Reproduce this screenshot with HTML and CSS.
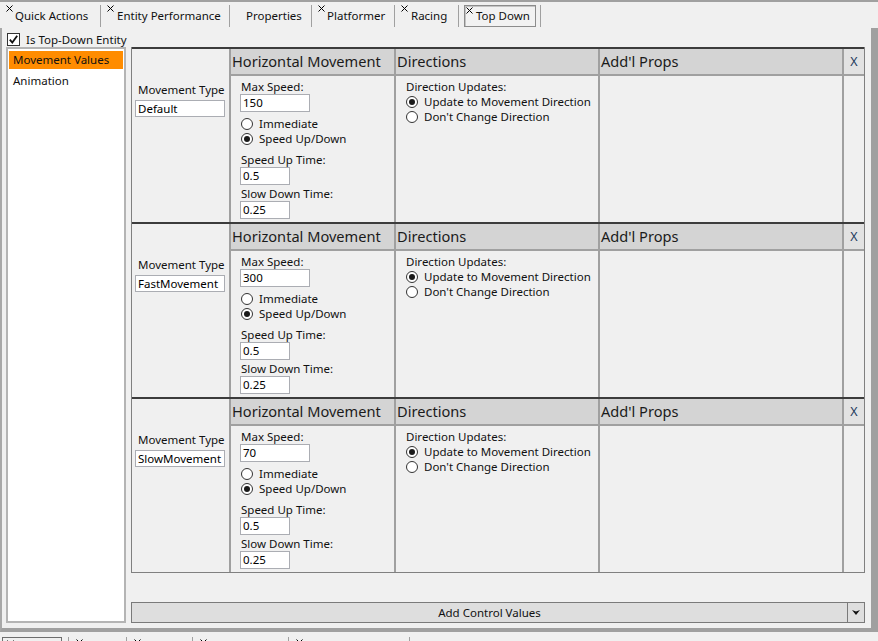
FILE: index.html
```html
<!DOCTYPE html>
<html>
<head>
<meta charset="utf-8">
<title>Top Down</title>
<link rel="stylesheet" href="styles.css">
</head>
<body>
<div class="tabstrip">
  <div class="tab tab-qa"><svg class="close" width="7" height="7" viewBox="0 0 7 7"><path d="M0.5 0.5L6.5 6.5M6.5 0.5L0.5 6.5"/></svg>Quick Actions</div>
  <div class="tab tab-ep"><svg class="close" width="7" height="7" viewBox="0 0 7 7"><path d="M0.5 0.5L6.5 6.5M6.5 0.5L0.5 6.5"/></svg>Entity Performance</div>
  <div class="tab tab-pr">Properties</div>
  <div class="tab tab-pf"><svg class="close" width="7" height="7" viewBox="0 0 7 7"><path d="M0.5 0.5L6.5 6.5M6.5 0.5L0.5 6.5"/></svg>Platformer</div>
  <div class="tab tab-ra"><svg class="close" width="7" height="7" viewBox="0 0 7 7"><path d="M0.5 0.5L6.5 6.5M6.5 0.5L0.5 6.5"/></svg>Racing</div>
  <div class="tab tab-td"><div class="tab-selected"><svg class="close close-sel" width="7" height="7" viewBox="0 0 7 7"><path d="M0.5 0.5L6.5 6.5M6.5 0.5L0.5 6.5"/></svg>Top Down</div></div>
</div>

<div class="page">
  <div class="check-row">
    <svg class="checkbox" width="13" height="13" viewBox="0 0 13 13"><rect x="0.5" y="0.5" width="12" height="12" fill="#fff" stroke="#333"/><path d="M2.8 6.6L5.3 9.6L10.2 2.8" fill="none" stroke="#111" stroke-width="1.8"/></svg>
    <span>Is Top-Down Entity</span>
  </div>
  <div class="workspace">
    <ul class="listbox">
      <li class="item selected">Movement Values</li>
      <li class="item">Animation</li>
    </ul>
    <div class="main">
      <div class="blocks">
        <section class="block">
          <div class="type-cell">
            <div class="lbl type-lbl">Movement Type</div>
            <div class="textbox type-box">Default</div>
          </div>
          <div class="hdr">Horizontal Movement</div>
          <div class="hdr">Directions</div>
          <div class="hdr">Add'l Props</div>
          <div class="hdr hdr-x">X</div>
          <div class="body hm">
            <div class="lbl">Max Speed:</div>
            <div class="textbox tb-wide">150</div>
            <div class="radios">
              <div class="radio-row"><span class="radio"></span>Immediate</div>
              <div class="radio-row"><span class="radio on"></span>Speed Up/Down</div>
            </div>
            <div class="lbl gap-a">Speed Up Time:</div>
            <div class="textbox tb-narrow">0.5</div>
            <div class="lbl gap-b">Slow Down Time:</div>
            <div class="textbox tb-narrow">0.25</div>
          </div>
          <div class="body dirs">
            <div class="lbl">Direction Updates:</div>
            <div class="radio-row"><span class="radio on"></span>Update to Movement Direction</div>
            <div class="radio-row"><span class="radio"></span>Don't Change Direction</div>
          </div>
          <div class="body"></div>
          <div class="body"></div>
        </section>

        <section class="block">
          <div class="type-cell">
            <div class="lbl type-lbl">Movement Type</div>
            <div class="textbox type-box">FastMovement</div>
          </div>
          <div class="hdr">Horizontal Movement</div>
          <div class="hdr">Directions</div>
          <div class="hdr">Add'l Props</div>
          <div class="hdr hdr-x">X</div>
          <div class="body hm">
            <div class="lbl">Max Speed:</div>
            <div class="textbox tb-wide">300</div>
            <div class="radios">
              <div class="radio-row"><span class="radio"></span>Immediate</div>
              <div class="radio-row"><span class="radio on"></span>Speed Up/Down</div>
            </div>
            <div class="lbl gap-a">Speed Up Time:</div>
            <div class="textbox tb-narrow">0.5</div>
            <div class="lbl gap-b">Slow Down Time:</div>
            <div class="textbox tb-narrow">0.25</div>
          </div>
          <div class="body dirs">
            <div class="lbl">Direction Updates:</div>
            <div class="radio-row"><span class="radio on"></span>Update to Movement Direction</div>
            <div class="radio-row"><span class="radio"></span>Don't Change Direction</div>
          </div>
          <div class="body"></div>
          <div class="body"></div>
        </section>

        <section class="block">
          <div class="type-cell">
            <div class="lbl type-lbl">Movement Type</div>
            <div class="textbox type-box">SlowMovement</div>
          </div>
          <div class="hdr">Horizontal Movement</div>
          <div class="hdr">Directions</div>
          <div class="hdr">Add'l Props</div>
          <div class="hdr hdr-x">X</div>
          <div class="body hm">
            <div class="lbl">Max Speed:</div>
            <div class="textbox tb-wide">70</div>
            <div class="radios">
              <div class="radio-row"><span class="radio"></span>Immediate</div>
              <div class="radio-row"><span class="radio on"></span>Speed Up/Down</div>
            </div>
            <div class="lbl gap-a">Speed Up Time:</div>
            <div class="textbox tb-narrow">0.5</div>
            <div class="lbl gap-b">Slow Down Time:</div>
            <div class="textbox tb-narrow">0.25</div>
          </div>
          <div class="body dirs">
            <div class="lbl">Direction Updates:</div>
            <div class="radio-row"><span class="radio on"></span>Update to Movement Direction</div>
            <div class="radio-row"><span class="radio"></span>Don't Change Direction</div>
          </div>
          <div class="body"></div>
          <div class="body"></div>
        </section>
      </div>
      <div class="combo">
        <span class="combo-text">Add Control Values</span>
        <span class="combo-btn"><svg width="8" height="5" viewBox="0 0 8 5"><path d="M0 0L4 1.4L8 0L4 5Z" fill="#111"/></svg></span>
      </div>
    </div>
  </div>
</div>

<div class="bottomstrip">
  <div class="btab btab-sel"><svg class="close" width="7" height="7" viewBox="0 0 7 7"><path d="M0.5 0.5L6.5 6.5M6.5 0.5L0.5 6.5"/></svg></div>
  <div class="btab btab-2"><svg class="close" width="7" height="7" viewBox="0 0 7 7"><path d="M0.5 0.5L6.5 6.5M6.5 0.5L0.5 6.5"/></svg></div>
  <div class="btab btab-3"><svg class="close" width="7" height="7" viewBox="0 0 7 7"><path d="M0.5 0.5L6.5 6.5M6.5 0.5L0.5 6.5"/></svg></div>
  <div class="btab btab-4"><svg class="close" width="7" height="7" viewBox="0 0 7 7"><path d="M0.5 0.5L6.5 6.5M6.5 0.5L0.5 6.5"/></svg></div>
  <div class="btab btab-5"><svg class="close" width="7" height="7" viewBox="0 0 7 7"><path d="M0.5 0.5L6.5 6.5M6.5 0.5L0.5 6.5"/></svg></div>
  <div class="btab btab-6"></div>
</div>
</body>
</html>
```

FILE: styles.css
```css
* {
  box-sizing: border-box;
  margin: 0;
  padding: 0;
}

html,
body {
  width: 878px;
  height: 641px;
  overflow: hidden;
}

body {
  background: #f0f0f0;
  font-family: "Noto Sans", "Segoe UI", sans-serif;
  font-size: 11.5px;
  color: #000;
}

/* ---------- top tab strip ---------- */
.tabstrip {
  display: flex;
  align-items: flex-start;
  height: 28px;
  border-top: 2px solid #a0a0a0;
}

.tab {
  position: relative;
  height: 22px;
  margin-top: 3px;
  padding-left: 16px;
  line-height: 22px;
  border-right: 1px solid #a0a0a0;
  color: #111;
  white-space: nowrap;
}

.tab-qa { width: 101px; padding-left: 15px; }
.tab-ep { width: 129px; }
.tab-pr { width: 82px; }
.tab-pf { width: 83px; padding-left: 15px; }
.tab-ra { width: 64px; }
.tab-td { width: 82px; padding-left: 5px; }

.close {
  position: absolute;
  left: 6px;
  top: 0;
  stroke: #000;
  stroke-width: 1;
}

.tab-selected {
  position: relative;
  width: 72px;
  height: 22px;
  padding-left: 11px;
  line-height: 20px;
  border: 1px solid #8c8c8c;
  box-shadow: inset 1px 1px 0 #c4c4c4;
  background: #f2f2f2;
}

.close-sel {
  left: 1px;
  top: 1px;
}

/* ---------- page ---------- */
.page {
  height: 604px;
  padding: 0 6px 5px 4px;
  border-left: 2px solid #a8a8a8;
  border-right: 7px solid #a0a0a0;
  border-bottom: 4px solid #a0a0a0;
  display: flex;
  flex-direction: column;
}

.check-row {
  display: flex;
  align-items: center;
  gap: 6px;
  height: 15px;
  margin: 4px 0 0 1px;
  color: #111;
}

.checkbox {
  display: block;
  flex: none;
}

.workspace {
  display: flex;
  gap: 5px;
  height: 576px;
}

.listbox {
  list-style: none;
  width: 120px;
  height: 576px;
  background: #fff;
  border: 2px solid #b4b4b4;
  padding: 2px 1px 1px;
}

.item {
  height: 18px;
  line-height: 18px;
  margin-bottom: 3px;
  padding-left: 4px;
  color: #111;
}

.item.selected {
  background: #ff8c00;
}

.main {
  width: 734px;
  display: flex;
  flex-direction: column;
}

.blocks {
  border: 1px solid #808080;
  border-top: none;
}

.block {
  display: grid;
  grid-template-columns: 97px 165px 204px 244px 22px;
  grid-template-rows: 27px 146px;
  border-top: 2px solid #3c3c3c;
}

.type-cell {
  grid-row: 1 / 3;
  padding: 33px 0 0 3px;
}

.type-lbl {
  padding-left: 3px;
}

.hdr {
  background: #d4d4d4;
  border-left: 2px solid #a0a0a0;
  border-bottom: 2px solid #a0a0a0;
  font-size: 14.6px;
  line-height: 25px;
  padding-left: 1px;
  color: #1b1b1b;
  white-space: nowrap;
  overflow: hidden;
}

.hdr-x {
  background: #e2e2e2;
  padding-left: 0;
  text-align: center;
  font-size: 12.5px;
  color: #1e395b;
}

.body {
  border-left: 2px solid #a0a0a0;
}

.hm {
  padding: 3px 0 0 10px;
}

.dirs {
  padding: 3px 0 0 10px;
}

.lbl {
  line-height: 15px;
  color: #111;
  white-space: nowrap;
}

.gap-a {
  margin-top: 6px;
}

.gap-b {
  margin-top: 1px;
}

.textbox {
  height: 18px;
  line-height: 16px;
  padding-left: 2px;
  background: #fff;
  border: 1px solid #abadb3;
  color: #000;
  white-space: nowrap;
  overflow: hidden;
}

.type-box {
  width: 90px;
  height: 17px;
  line-height: 15px;
  margin-top: 3px;
}

.tb-wide {
  width: 70px;
  margin-left: -1px;
}

.tb-narrow {
  width: 50px;
  margin-left: -1px;
}

.radios {
  margin-top: 4px;
}

.radio-row {
  display: flex;
  align-items: center;
  gap: 6px;
  height: 15px;
  line-height: 15px;
  color: #111;
  white-space: nowrap;
}

.radio {
  flex: none;
  width: 12px;
  height: 12px;
  border: 1px solid #333;
  border-radius: 50%;
  background: #fff;
  display: flex;
  align-items: center;
  justify-content: center;
}

.radio.on::after {
  content: "";
  width: 6px;
  height: 6px;
  border-radius: 50%;
  background: #1a1a1a;
}

/* ---------- combo ---------- */
.combo {
  display: flex;
  height: 21px;
  margin-top: 29px;
  background: #dedede;
  border: 1px solid #7a7a7a;
}

.combo-text {
  flex: 1;
  text-align: center;
  line-height: 19px;
  color: #111;
}

.combo-btn {
  width: 17px;
  border-left: 1px solid #7a7a7a;
  display: flex;
  align-items: center;
  justify-content: center;
}

.combo-btn svg {
  display: block;
}

/* ---------- bottom strip ---------- */
.bottomstrip {
  display: flex;
  height: 9px;
  overflow: hidden;
}

.btab {
  position: relative;
  height: 10px;
  margin-top: 5px;
  border-left: 1px solid #a0a0a0;
}

.btab .close {
  left: 7px;
  top: 2px;
}

.btab-sel {
  width: 60px;
  margin-left: 2px;
  border: 1px solid #6e6e6e;
}

.btab-sel .close {
  left: 4px;
}

.btab-2 { margin-left: 6px; width: 58px; }
.btab-3 { width: 66px; }
.btab-4 { width: 96px; }
.btab-5 { width: 121px; }
.btab-6 { width: 60px; }
```
